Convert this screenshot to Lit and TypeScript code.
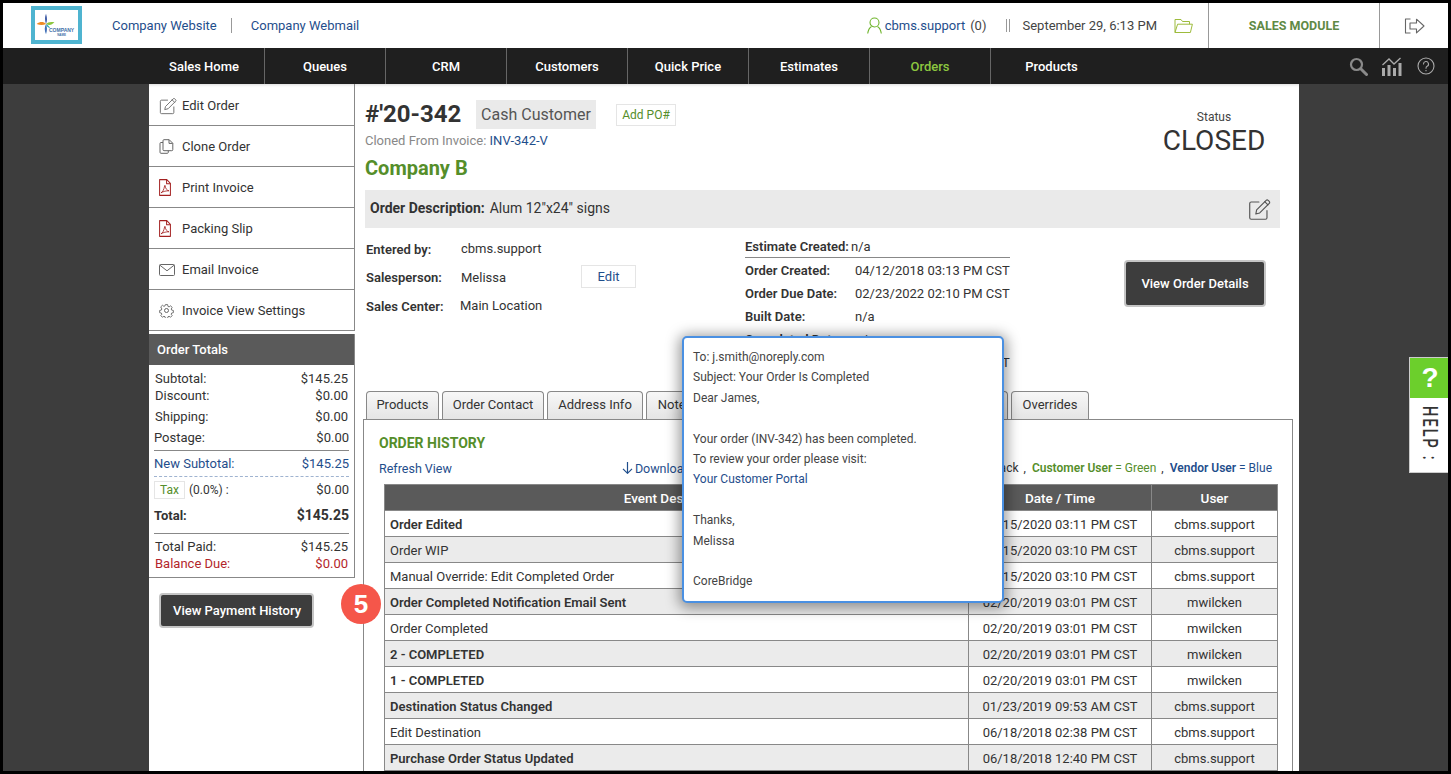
import { LitElement, html, css } from "lit";
import { customElement } from "lit/decorators.js";

const penIcon = (s: number, c = "#666") => html`<svg width=${s} height=${s} viewBox="0 0 20 20" fill="none" stroke=${c} stroke-width="1" stroke-linejoin="round" stroke-linecap="round"><path d="M9.5 3.5H2.8A1.3 1.3 0 0 0 1.5 4.8v12.4a1.3 1.3 0 0 0 1.3 1.3h12.4a1.3 1.3 0 0 0 1.3-1.3V11"/><path d="M7.5 10.3 15.8 2a1.2 1.2 0 0 1 1.7 0l1 1a1.2 1.2 0 0 1 0 1.7l-8.3 8.3-3.4.9z"/><path d="m14.6 3.2 2.7 2.7"/></svg>`;
const cloneIcon = html`<svg width="15" height="15" viewBox="0 0 15 15" fill="none" stroke="#666" stroke-width="1" stroke-linejoin="round"><path d="M5 .7h5.2l3.6 3.6v6.4a1 1 0 0 1-1 1H5a1 1 0 0 1-1-1V1.7a1 1 0 0 1 1-1z"/><path d="M10 .8v3.6h3.7"/><path d="M4 3.5H2a1 1 0 0 0-1 1v8.8a1 1 0 0 0 1 1h6.3a1 1 0 0 0 1-1v-1.6"/></svg>`;
const pdfIcon = html`<svg width="12" height="17" viewBox="0 0 12 16" preserveAspectRatio="none" fill="none" stroke="#a32020" stroke-width="1" stroke-linejoin="round"><path d="M.6.6h7.2l3.6 3.6v11.2H.6z"/><path d="M7.6.7v3.7h3.7"/><path d="M2 13c1.6-.6 3-3.2 3.6-6.4.1-.9.5-.9.6 0 .3 2.4 1.8 4.2 3.8 4.5-2.6-.1-5.8.6-8 1.9z" stroke-width=".8"/></svg>`;
const mailIcon = html`<svg width="16" height="12" viewBox="0 0 16 12" fill="none" stroke="#666" stroke-width="1" stroke-linejoin="round"><rect x=".5" y=".5" width="15" height="11" rx="1"/><path d="m.9 1.2 7.1 5.6 7.1-5.6"/></svg>`;
const gearIcon = html`<svg width="15" height="15" viewBox="0 0 24 24" fill="none" stroke="#666" stroke-width="1.6" stroke-linejoin="round"><circle cx="12" cy="12" r="3.2"/><path d="M10 1.5h4l.6 3.2 2 .9 2.7-1.9 2.9 2.9-1.9 2.7.9 2 3 .6v4l-3 .6-.9 2 1.8 2.6-2.9 2.9-2.6-1.8-2 .9-.6 3h-4l-.6-3-2-.9-2.6 1.8-2.9-2.9 1.8-2.6-.9-2-3-.6v-4l3-.6.9-2L1.8 5.6l2.9-2.9 2.7 1.9 2-.9z" transform="translate(1.2 1.2) scale(.9)"/></svg>`;
const rows = [
  ["Order Edited", 1, "12/15/2020 03:11 PM CST", "cbms.support"],
  ["Order WIP", 0, "12/15/2020 03:10 PM CST", "cbms.support"],
  ["Manual Override: Edit Completed Order", 0, "12/15/2020 03:10 PM CST", "cbms.support"],
  ["Order Completed Notification Email Sent", 1, "02/20/2019 03:01 PM CST", "mwilcken"],
  ["Order Completed", 0, "02/20/2019 03:01 PM CST", "mwilcken"],
  ["2 - COMPLETED", 1, "02/20/2019 03:01 PM CST", "mwilcken"],
  ["1 - COMPLETED", 1, "02/20/2019 03:01 PM CST", "mwilcken"],
  ["Destination Status Changed", 1, "01/23/2019 09:53 AM CST", "cbms.support"],
  ["Edit Destination", 0, "06/18/2018 02:38 PM CST", "cbms.support"],
  ["Purchase Order Status Updated", 1, "06/18/2018 12:40 PM CST", "cbms.support"],
] as const;

@customElement("app-root")
export class AppRoot extends LitElement {
  static styles = css`
    :host { display: block; box-sizing: border-box; width: 1451px; height: 774px; border: 3px solid #000; overflow: hidden; position: relative; font-family: Roboto, sans-serif; font-size: 13px; color: #333; background: #3d3d3d; }
    * { box-sizing: border-box; }
    a { color: #1f4e8c; text-decoration: none; }
    .top { height: 45px; background: #fff; display: flex; align-items: center; padding-left: 28px; }
    .logo { width: 51px; height: 38px; border: 4px solid #4fb4d0; margin-right: 30px; position: relative; background: #fff; margin-top: -1px; flex: none; }
    .logo svg { position: absolute; left: 0; top: 2px; }
    .logo-t { position: absolute; left: 14px; top: 18px; font: bold 5px/5px "Liberation Sans", sans-serif; color: #3f6fa8; text-align: center; }
    .logo-t span { display: block; font-size: 3px; line-height: 4px; }
    .toplink { color: #1f4e8c; line-height: 16px; }
    .sep { width: 1px; height: 15px; background: #999; margin: 0 19px 0 14px; }
    .top-right { margin-left: auto; display: flex; align-items: center; height: 45px; }
    .user { display: flex; align-items: center; gap: 3px; color: #1f4e8c; margin-right: 20px; }
    .user span { color: #444; margin-left: 2px; }
    .bars { width: 4px; height: 13px; border-left: 1px solid #999; border-right: 1px solid #999; }
    .date { color: #444; margin: 0 17px 0 12px; }
    .mod { height: 45px; width: 172px; border-left: 1px solid #999; border-right: 1px solid #999; margin-left: 15px; display: flex; align-items: center; justify-content: center; font-weight: 700; font-size: 12.5px; color: #5f8a45; }
    .exit { width: 68px; display: flex; justify-content: center; }
    .nav { height: 36px; background: #1f1f1f; display: flex; padding-left: 141px; align-items: stretch; position: relative; }
    .nav-i { width: 121px; display: flex; align-items: center; justify-content: center; color: #fff; border-right: 1px solid #666; font-weight: 500; font-size: 13px; }
    .nav-i:nth-child(8) { border-right: 0; }
    .nav-i.on { color: #8cc63f; }
    .nav-tools { margin-left: auto; display: flex; align-items: center; gap: 13px; padding-right: 13px; }
    .nav-tools svg:last-child { margin-left: 2px; }
    .body { display: flex; margin-left: 146px; width: 1150px; height: 687px; background: #fff; box-shadow: inset 0 3px 3px -2px rgba(0,0,0,.15); }
    .side { width: 206px; flex: none; }
    .menu { border-right: 1px solid #888; padding-top: 1px; }
    .mi { height: 41px; display: flex; align-items: center; border-bottom: 1px solid #888; padding: 1px 0 0 10px; color: #333; }
    .mi-ic { width: 23px; display: flex; }
    .totals { margin-top: 3px; border-right: 1px solid #888; border-bottom: 1px solid #888; }
    .tot-h { height: 31px; background: #5a5a5a; color: #fff; padding-left: 8px; display: flex; align-items: center; font-weight: 500; }
    .tot-b { height: 212px; padding-top: 5px; }
    .tr { display: flex; justify-content: space-between; align-items: center; height: 17px; padding: 0 6px; }
    .tr.low { height: 21px; align-items: flex-end; }
    .tr.s20 { height: 20px; }
    .tr.w5 { padding: 0 5px; }
    .tr.h25 { height: 25px; }
    .tr.tot { height: 26px; font-weight: 700; font-size: 14px; }
    .tr.tot span:first-child { font-size: 13px; }
    .tr.h18 { height: 18px; }
    .line { margin: 5px 5px 0; border-top: 1px solid #888; }
    .dash { margin: 0 5px; border-top: 1px dashed #9fb3d0; }
    .blue { color: #1f4e8c; }
    .red { color: #b3262b; }
    .tax { border: 1px solid #e5e5e5; color: #558e2a; padding: 0 5px; height: 18px; line-height: 16px; font-size: 12px; display: inline-block; margin-right: 4px; }
    .pct { font-size: 12px; }
    .darkbtn { background: #3d3d3d; color: #fff; border: 2px solid #c5c5c5; border-radius: 4px; display: flex; align-items: center; justify-content: center; font-weight: 500; flex: none; }
    .pay { width: 155px; height: 35px; margin: 15px 0 0 10px; padding-left: 1px; }
    .main { flex: 1; padding: 16px 6px 0 8px; min-width: 0; }
    .head { display: flex; padding-left: 2px; height: 90px; }
    .head-l { flex: 1; }
    .title { display: flex; align-items: center; height: 29px; }
    .num { font-size: 24px; font-weight: 700; width: 111px; line-height: 29px; }
    .cash { background: #eaeaea; height: 29px; width: 120px; font-size: 16px; color: #555; display: flex; align-items: center; justify-content: center; margin-right: 20px; }
    .po { border: 1px solid #e5e5e5; width: 60px; height: 22px; font-size: 12px; color: #558e2a; display: flex; align-items: center; justify-content: center; }
    .cloned { color: #888; line-height: 16px; margin-top: 4px; }
    .company { color: #558e2a; font-size: 20px; font-weight: 700; line-height: 24px; margin-top: 7px; }
    .status { width: 132px; margin-right: 13px; text-align: center; margin-top: 10px; font-size: 12px; color: #444; line-height: 15px; }
    .closed { font-size: 28px; line-height: 32px; color: #333; }
    .desc { margin: 0 13px 0 2px; height: 38px; background: #eaeaea; display: flex; align-items: center; padding: 0 9px 2px 5px; font-size: 14px; color: #333; }
    .desc b { font-weight: 700; margin-right: 5px; }
    .desc i { margin-left: auto; display: flex; font-style: normal; margin-top: 2px; }
    .info { display: flex; height: 163px; padding-left: 3px; }
    .left { width: 379px; padding-top: 7px; flex: none; }
    .lr { display: flex; align-items: center; height: 28.5px; }
    .lr b { width: 95px; font-weight: 600; flex: none; }
    .v { margin-top: -2px; }
    .v.sc { margin-left: -1px; }
    .edit { border: 1px solid #e5e5e5; width: 55px; height: 23px; margin-left: 75px; display: flex; align-items: center; justify-content: center; color: #1f4e8c; margin-top: -3px; }
    .mid { width: 265px; padding-top: 8px; flex: none; }
    .mr { display: flex; height: 23px; align-items: center; white-space: nowrap; }
    .mr b { width: 110px; font-weight: 600; flex: none; }
    .mr.first { border-bottom: 1px solid #888; height: 22px; margin-bottom: 1px; }
    .mr.first b { width: 106px; }
    .view { width: 142px; height: 47px; margin: 32px 0 0 114px; }
    .tabs { display: flex; gap: 3px; padding-left: 3px; height: 29px; }
    .tab { height: 29px; border: 1px solid #888; border-bottom: 0; border-radius: 4px 4px 0 0; background: linear-gradient(#f7f7f7, #e4e4e4); display: flex; align-items: center; justify-content: center; color: #333; padding-bottom: 4px; flex: none; }
    .t73 { width: 73px; } .t102 { width: 102px; } .t96 { width: 96px; } .t58 { width: 58px; }
    .t103 { width: 103px; } .t92 { width: 92px; } .t100 { width: 100px; } .t78 { width: 78px; }
    .panel { border: 1px solid #888; border-bottom: 0; height: 400px; padding: 14px 15px 0; margin-top: -1px; background: #fff; position: relative; }
    .oh { color: #558e2a; font-size: 14px; font-weight: 700; line-height: 18px; }
    .tool { display: flex; font-size: 12.5px; height: 24px; align-items: center; margin-top: 4px; white-space: nowrap; }
    .dl { margin-left: 170px; display: flex; align-items: center; gap: 2px; }
    .legend { margin-left: auto; margin-right: 5px; font-size: 12px; }
    .legend b { font-weight: 600; }
    .cm { margin: 0 6px 0 5px; }
    .g { color: #558e2a; }
    table { border-collapse: collapse; margin: 4px 0 0 5px; width: 893px; table-layout: fixed; }
    .c1 { width: 584px; } .c2 { width: 183px; } .c3 { width: 126px; }
    th { background: #5a5a5a; color: #fff; font-weight: 500; height: 26px; border: 1px solid #888; padding: 0; font-size: 13.5px; }
    td { height: 26px; border: 1px solid #888; padding: 1px 5px 0; text-align: center; white-space: nowrap; }
    td.e { text-align: left; }
    td.b { font-weight: 600; }
    tr.alt td { background: #ebebeb; }
    .popup { position: absolute; left: 679px; top: 333px; width: 322px; height: 267px; background: #fff; border: 2px solid #4a90e2; border-radius: 5px; box-shadow: 0 2px 14px 3px rgba(0,0,0,.4); padding: 9px 9px; font-size: 12px; line-height: 20.4px; color: #444; }
    .badge { position: absolute; left: 338px; top: 581px; width: 40px; height: 40px; border-radius: 50%; background: #f5564a; color: #fff; font: 700 26px/40px "Liberation Sans", sans-serif; text-align: center; }
    .help { position: absolute; left: 1406px; top: 354px; width: 40px; height: 116px; background: #fff; border: 1px solid #ccc; border-right: 0; overflow: hidden; }
    .help-q { height: 41px; margin: -1px 0 0 -1px; width: 41px; padding-left: 1px; background: #6ccf2c; color: #fff; font: 700 28px/41px "Liberation Sans", sans-serif; text-align: center; }
    .help-t { writing-mode: vertical-rl; font-weight: 500; font-size: 20px; letter-spacing: 3px; color: #333; margin-top: 8px; width: 40px; display: flex; align-items: center; line-height: 40px; white-space: nowrap; transform: scaleY(.72); transform-origin: top; }
  `;

  render() {
    const nav = ["Sales Home", "Queues", "CRM", "Customers", "Quick Price", "Estimates", "Orders", "Products"];
    const menu: [string, unknown][] = [
      ["Edit Order", penIcon(18)], ["Clone Order", cloneIcon], ["Print Invoice", pdfIcon],
      ["Packing Slip", pdfIcon], ["Email Invoice", mailIcon], ["Invoice View Settings", gearIcon],
    ];
    return html`
      <div class="top">
        <div class="logo">
          <svg width="22" height="24" viewBox="0 0 26 26">
            <path d="M13 1c1.5 5 1.5 8 0 12-1.5-4-1.5-8 0-12z" fill="#2f4f9f"/><path d="M13 13c2-2 5-3 10-2-3 3-6 4-10 2z" fill="#8cc63f"/><path d="M13 13c1.5 4 1.5 8 0 12-2-4-2-8 0-12z" fill="#3f6fb8"/><path d="M13 13c-3 1.5-7 1.5-11 0 4-3 8-3 11 0z" fill="#f08a24"/><path d="M13 13c2 1 4 3 5 5-3-1-5-3-5-5z" fill="#2fa8b8"/>
          </svg>
          <div class="logo-t">COMPANY<span>NAME</span></div>
        </div>
        <a class="toplink">Company Website</a><div class="sep"></div><a class="toplink">Company Webmail</a>
        <div class="top-right">
          <div class="user">
            <svg width="15" height="17" viewBox="0 0 15 17" fill="none" stroke="#6fb52c" stroke-width="1.1"><circle cx="7.5" cy="5.5" r="4.5"/><path d="M.7 16.5c.6-4 3-6.5 3.8-7M14.3 16.5c-.6-4-3-6.5-3.8-7"/></svg>
            cbms.support<span>(0)</span>
          </div>
          <div class="bars"></div>
          <div class="date">September 29, 6:13 PM</div>
          <svg width="19" height="16" viewBox="0 0 19 16" fill="none" stroke="#9dbb3c" stroke-width="1" stroke-linejoin="round"><path d="M1 14.5V1.5h6l1.5 2h7v2.7"/><path d="M1 14.5 3.6 6.2h14.8l-2 8.3z"/></svg>
          <div class="mod">SALES MODULE</div>
          <div class="exit">
            <svg width="21" height="16" viewBox="0 0 21 16" fill="none" stroke="#666" stroke-width="1.1" stroke-linejoin="round"><path d="M6.5 1H1.5v14h5"/><path d="M6 5h6.5V1.2L20 8l-7.5 6.8V11H6z"/></svg>
          </div>
        </div>
      </div>
      <div class="nav">
        ${nav.map(n => html`<div class="nav-i ${n === "Orders" ? "on" : ""}">${n}</div>`)}
        <div class="nav-tools">
          <svg width="19" height="19" viewBox="0 0 19 19" fill="none" stroke="#8a8a8a"><circle cx="7.5" cy="7.5" r="5.5" stroke-width="2.2"/><path d="m12 12 5.5 5.5" stroke-width="3" stroke-linecap="round"/></svg>
          <svg width="21" height="19" viewBox="0 0 21 19" fill="#aaa"><rect x="1" y="11" width="3" height="8"/><rect x="6.5" y="8" width="3" height="11"/><rect x="12" y="11" width="3" height="8"/><rect x="17.5" y="6" width="3" height="13"/><path d="M1.5 8 8 2l5 5 6.5-6" fill="none" stroke="#aaa" stroke-width="1.3"/></svg>
          <svg width="18" height="18" viewBox="0 0 18 18" fill="none" stroke="#aaa" stroke-width="1.1"><circle cx="9" cy="9" r="8"/><path d="M6.5 7a2.5 2.5 0 1 1 3.6 2.3c-.8.4-1.1 1-1.1 1.9" stroke-linecap="round"/><path d="M9 13v1.2"/></svg>
        </div>
      </div>
      <div class="body">
        <div class="side">
          <div class="menu">
            ${menu.map(([t, i]) => html`<div class="mi"><span class="mi-ic">${i}</span>${t}</div>`)}
          </div>
          <div class="totals">
            <div class="tot-h">Order Totals</div>
            <div class="tot-b">
              <div class="tr"><span>Subtotal:</span><span>$145.25</span></div>
              <div class="tr"><span>Discount:</span><span>$0.00</span></div>
              <div class="tr low s20"><span>Shipping:</span><span>$0.00</span></div>
              <div class="tr low w5"><span>Postage:</span><span>$0.00</span></div>
              <div class="line"></div>
              <div class="tr blue w5 h25"><span>New Subtotal:</span><span>$145.25</span></div>
              <div class="dash"></div>
              <div class="tr w5 h25"><span><span class="tax">Tax</span><span class="pct">(0.0%) :</span></span><span>$0.00</span></div>
              <div class="tr w5 tot"><span>Total:</span><span>$145.25</span></div>
              <div class="line"></div>
              <div class="tr low s20"><span>Total Paid:</span><span>$145.25</span></div>
              <div class="tr red h18"><span>Balance Due:</span><span>$0.00</span></div>
            </div>
          </div>
          <div class="darkbtn pay">View Payment History</div>
        </div>
        <div class="main">
          <div class="head">
            <div class="head-l">
              <div class="title"><div class="num">#'20-342</div><div class="cash">Cash Customer</div><div class="po">Add PO#</div></div>
              <div class="cloned">Cloned From Invoice: <a>INV-342-V</a></div>
              <div class="company">Company B</div>
            </div>
            <div class="status">Status<div class="closed">CLOSED</div></div>
          </div>
          <div class="desc"><b>Order Description:</b>Alum 12"x24" signs<i>${penIcon(23, "#555")}</i></div>
          <div class="info">
            <div class="left">
              <div class="lr"><b>Entered by:</b><span class="v">cbms.support</span></div>
              <div class="lr"><b>Salesperson:</b>Melissa<div class="edit">Edit</div></div>
              <div class="lr"><b>Sales Center:</b><span class="v sc">Main Location</span></div>
            </div>
            <div class="mid">
              <div class="mr first"><b>Estimate Created:</b>n/a</div>
              <div class="mr"><b>Order Created:</b>04/12/2018 03:13 PM CST</div>
              <div class="mr"><b>Order Due Date:</b>02/23/2022 02:10 PM CST</div>
              <div class="mr"><b>Built Date:</b>n/a</div>
              <div class="mr"><b>Completed Date:</b>n/a</div>
              <div class="mr"><b>Closed Date:</b>02/20/2019 03:01 PM CST</div>
            </div>
            <div class="darkbtn view">View Order Details</div>
          </div>
          <div class="tabs">
            <div class="tab t73">Products</div>
            <div class="tab t102">Order Contact</div>
            <div class="tab t96">Address Info</div>
            <div class="tab t58">Notes</div>
            <div class="tab t103">Documents</div>
            <div class="tab t92">Shipping</div>
            <div class="tab t100">Order History</div>
            <div class="tab t78">Overrides</div>
          </div>
          <div class="panel">
            <div class="oh">ORDER HISTORY</div>
            <div class="tool">
              <a>Refresh View</a>
              <a class="dl"><svg width="11" height="12" viewBox="0 0 11 12" fill="none" stroke="#1f4e8c" stroke-width="1.2"><path d="M5.5 0v11M1 6.8l4.5 4.5L10 6.8"/></svg>Download History</a>
              <span class="legend">Internal User = Black<span class="cm">,</span><span class="g"><b>Customer User</b> = Green</span><span class="cm">,</span><span class="blue"><b>Vendor User</b> = Blue</span></span>
            </div>
            <table>
              <colgroup><col class="c1" /><col class="c2" /><col class="c3" /></colgroup>
              <thead><tr><th>Event Description</th><th>Date / Time</th><th>User</th></tr></thead>
              <tbody>
                ${rows.map((r, i) => html`<tr class=${i % 2 ? "alt" : ""}><td class="e ${r[1] ? "b" : ""}">${r[0]}</td><td>${r[2]}</td><td>${r[3]}</td></tr>`)}
              </tbody>
            </table>
          </div>
        </div>
      </div>
      <div class="popup">
        <div>To: j.smith@noreply.com</div>
        <div>Subject: Your Order Is Completed</div>
        <div>Dear James,</div>
        <div>&nbsp;</div>
        <div>Your order (INV-342) has been completed.</div>
        <div>To review your order please visit:</div>
        <div><a>Your Customer Portal</a></div>
        <div>&nbsp;</div>
        <div>Thanks,</div>
        <div>Melissa</div>
        <div>&nbsp;</div>
        <div>CoreBridge</div>
      </div>
      <div class="badge">5</div>
      <div class="help"><div class="help-q">?</div><div class="help-t">HELP :</div></div>
    `;
  }
}
